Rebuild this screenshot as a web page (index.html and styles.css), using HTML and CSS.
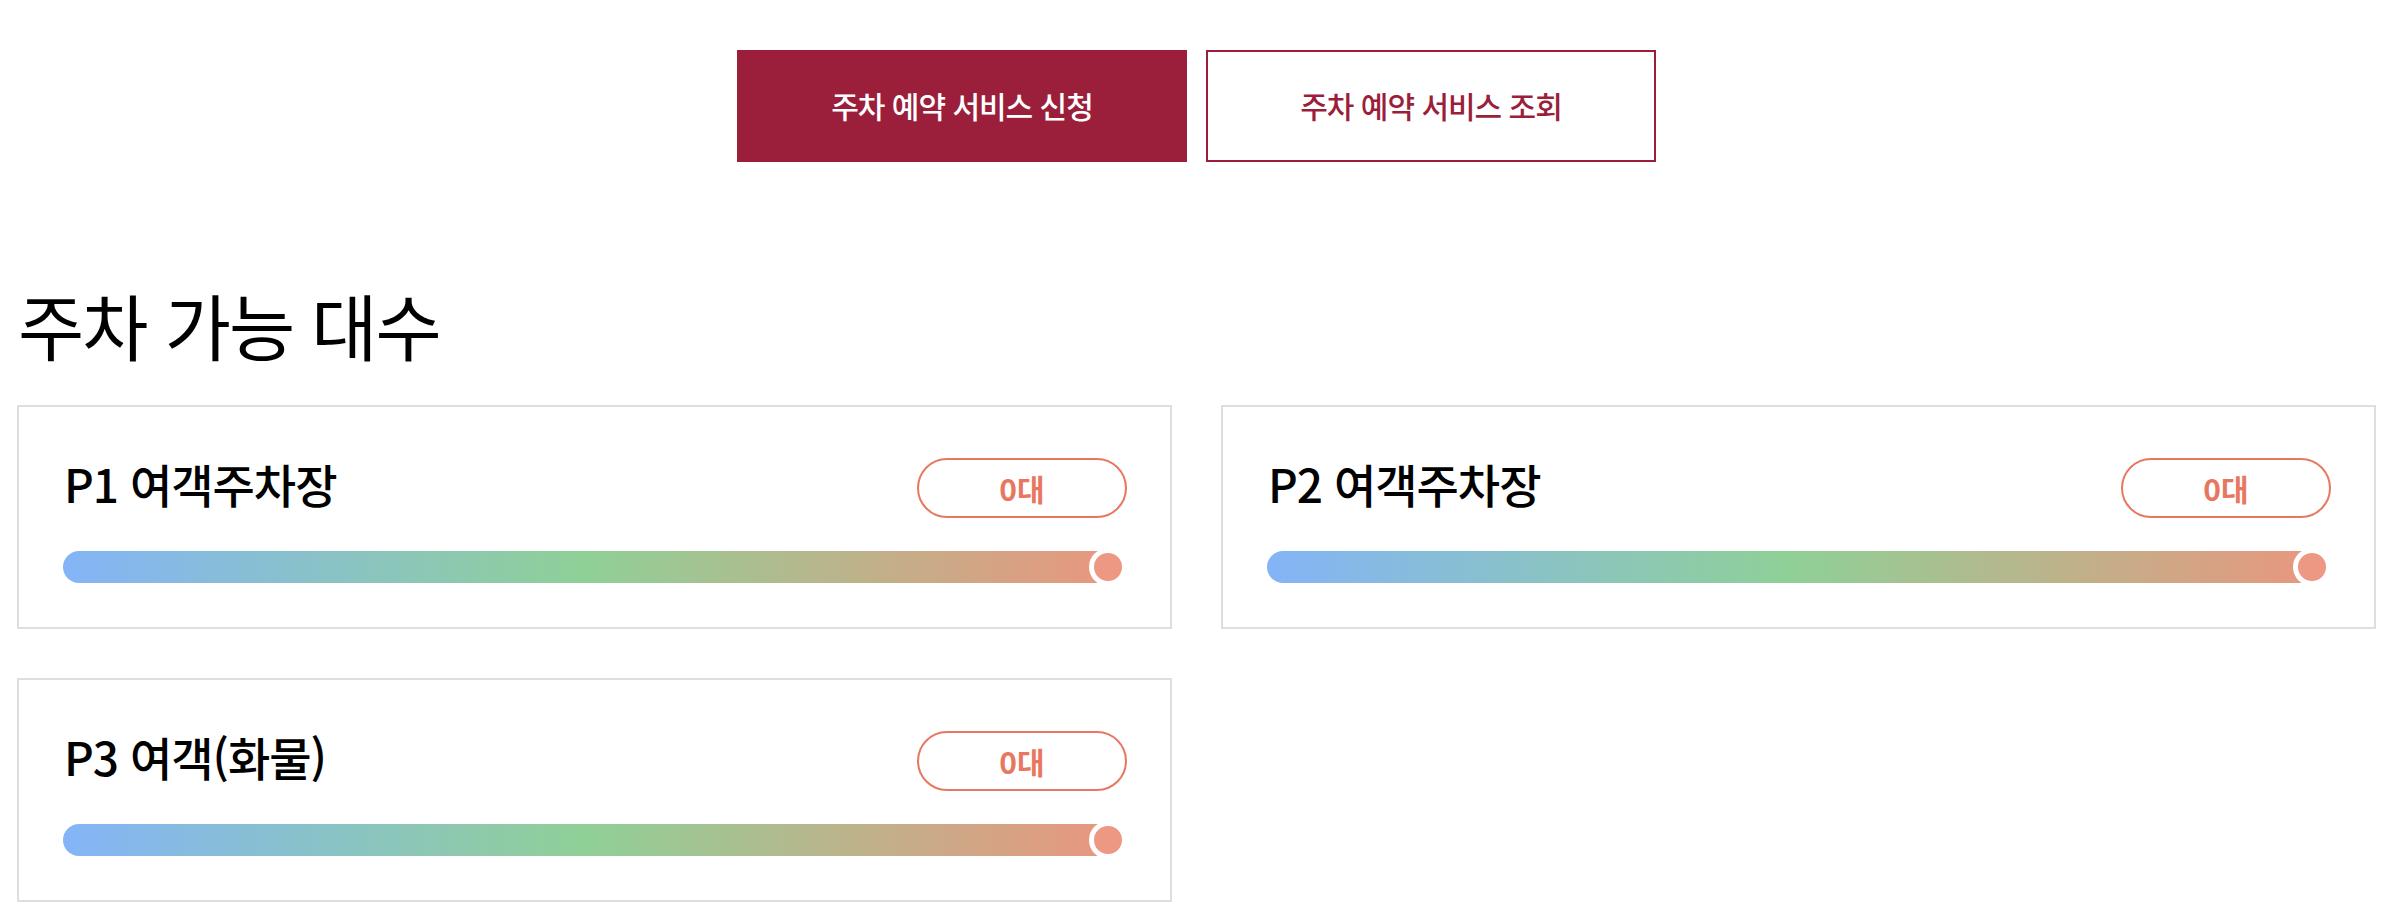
FILE: index.html
```html
<!DOCTYPE html>
<html lang="ko">
<head>
<meta charset="utf-8">
<title>주차 가능 대수</title>
<link rel="stylesheet" href="styles.css">
</head>
<body>
<div class="page">
  <div class="tabs">
    <a class="tab tab-active">주차 예약 서비스 신청</a>
    <a class="tab tab-outline">주차 예약 서비스 조회</a>
  </div>
  <h2 class="heading">주차 가능 대수</h2>
  <div class="grid">
    <div class="card">
      <div class="card-head">
        <span class="card-title">P1 여객주차장</span>
        <span class="badge">0대</span>
      </div>
      <div class="slider">
        <div class="track"></div>
        <div class="thumb"></div>
      </div>
    </div>
    <div class="card">
      <div class="card-head">
        <span class="card-title">P2 여객주차장</span>
        <span class="badge">0대</span>
      </div>
      <div class="slider">
        <div class="track"></div>
        <div class="thumb"></div>
      </div>
    </div>
    <div class="card">
      <div class="card-head">
        <span class="card-title">P3 여객(화물)</span>
        <span class="badge">0대</span>
      </div>
      <div class="slider">
        <div class="track"></div>
        <div class="thumb"></div>
      </div>
    </div>
  </div>
</div>
</body>
</html>
```
FILE: styles.css
```css
html, body {
  margin: 0;
  padding: 0;
  background: #ffffff;
}

body {
  font-family: "Noto Sans CJK KR", "Noto Sans", sans-serif;
  color: #000000;
}

.page {
  width: 2359px;
  margin-left: 17px;
  padding-top: 50px;
}

.tabs {
  display: flex;
  justify-content: center;
  gap: 19px;
}

.tab {
  box-sizing: border-box;
  width: 450px;
  height: 112px;
  display: flex;
  align-items: center;
  justify-content: center;
  font-size: 30px;
  font-weight: 500;
  letter-spacing: -1px;
  text-decoration: none;
  padding-bottom: 2px;
}

.tab-active {
  background: #9b1f3b;
  color: #ffffff;
}

.tab-outline {
  background: #ffffff;
  color: #9b1f3b;
  border: 2px solid #9b1f3b;
}

.heading {
  margin: 126px 0 0 1px;
  font-size: 72px;
  line-height: 72px;
  font-weight: 400;
  letter-spacing: -2px;
}

.grid {
  margin-top: 45px;
  display: grid;
  grid-template-columns: 1155px 1155px;
  column-gap: 49px;
  row-gap: 49px;
}

.card {
  box-sizing: border-box;
  height: 224px;
  border: 2px solid #dedede;
  padding: 51px 43px 0 44px;
}

.card-head {
  height: 60px;
  display: flex;
  align-items: center;
  justify-content: space-between;
}

.card-title {
  font-size: 46px;
  line-height: 1;
  font-weight: 500;
  letter-spacing: -1px;
  padding-left: 1px;
  margin-bottom: 10px;
}

.badge {
  box-sizing: border-box;
  width: 210px;
  height: 60px;
  border: 2px solid #e8775f;
  border-radius: 30px;
  display: flex;
  align-items: center;
  justify-content: center;
  color: #e8775f;
  font-size: 30px;
  font-weight: 700;
}

.slider {
  position: relative;
  margin-top: 30px;
  height: 38px;
  display: flex;
  align-items: center;
}

.track {
  width: calc(100% - 19px);
  height: 32px;
  border-radius: 16px 0 0 16px;
  background: linear-gradient(to right, #84b4f7 0%, #8fd097 50%, #e8977f 100%);
}

.thumb {
  position: absolute;
  right: 0;
  top: 0;
  box-sizing: border-box;
  width: 38px;
  height: 38px;
  border-radius: 50%;
  border: 5px solid #ffffff;
  background: #ec9883;
}
```
